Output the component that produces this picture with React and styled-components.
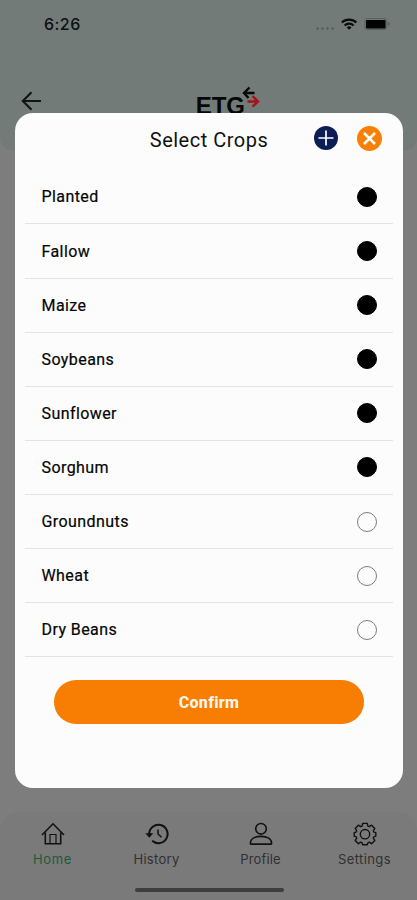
import React, { useState } from 'react';
import styled, { createGlobalStyle } from 'styled-components';

const GlobalStyle = createGlobalStyle`
  * {
    box-sizing: border-box;
  }
  body {
    margin: 0;
    font-family: Roboto, sans-serif;
  }
  button {
    border: 0;
    padding: 0;
    background: none;
    font: inherit;
    color: inherit;
    cursor: pointer;
  }
  svg {
    display: block;
  }
`;

const Screen = styled.div`
  position: relative;
  display: flex;
  flex-direction: column;
  width: 417px;
  height: 900px;
  overflow: hidden;
  background: #7d7d7d;
`;

const Header = styled.header`
  height: 151px;
  background: #737b78;
  border-radius: 0 0 14px 14px;
`;

const StatusBar = styled.div`
  display: flex;
  align-items: center;
  justify-content: space-between;
  height: 48px;
  padding: 0 26px 0 44px;
`;

const Time = styled.span`
  font-family: Inter, sans-serif;
  font-size: 16px;
  font-weight: 500;
  letter-spacing: 0.45px;
  color: #0c100f;
`;

const TitleBar = styled.div`
  display: flex;
  justify-content: space-between;
  padding: 37px 157px 0 21px;
`;

const BackButton = styled.button`
  height: 31px;
`;

const Logo = styled.div`
  display: flex;
  align-items: flex-start;
`;

const LogoText = styled.span`
  margin-top: 7px;
  font-family: 'Liberation Sans', sans-serif;
  font-size: 24px;
  font-weight: 700;
  line-height: 28px;
  color: #050807;
`;

const LogoArrows = styled.svg`
  margin-left: -3px;
`;

const TabBar = styled.nav`
  display: grid;
  grid-template-columns: repeat(4, 104px);
  height: 88px;
  margin-top: auto;
  padding-top: 10px;
  grid-template-rows: 56px 1fr;
  background: #7a7a7a;
  border-radius: 20px 20px 0 0;
`;

const Tab = styled.button`
  display: flex;
  flex-direction: column;
  align-items: center;
  gap: 4px;
  padding-left: 1px;
  font-family: Inter, sans-serif;
  font-size: 13px;
  line-height: 18px;
  letter-spacing: ${({ $spacing }) => $spacing}px;
  color: ${({ $active }) => ($active ? '#1c5a3c' : '#303030')};
`;

const HomeIndicator = styled.div`
  grid-column: 1 / -1;
  justify-self: center;
  width: 149px;
  height: 4px;
  margin-top: 10px;
  margin-left: 3px;
  border-radius: 3px;
  background: #3e3e3e;
`;

const Dialog = styled.section`
  position: absolute;
  top: 113px;
  left: 15px;
  width: 388px;
  height: 675px;
  padding: 0 10px;
  border-radius: 18px;
  background: #fcfcfc;
`;

const DialogHeader = styled.div`
  display: grid;
  grid-template-columns: 1fr auto 1fr;
  height: 57.4px;
`;

const DialogTitle = styled.h1`
  grid-column: 2;
  margin: 0;
  padding-top: 14px;
  font-size: 20px;
  font-weight: 400;
  line-height: 26px;
  letter-spacing: 0.5px;
  color: #111;
`;

const Actions = styled.div`
  display: flex;
  justify-content: flex-end;
  gap: 19px;
  padding: 13px 11px 0 0;
`;

const RoundButton = styled.button`
  display: flex;
  align-items: center;
  justify-content: center;
  width: ${({ $size }) => $size}px;
  height: ${({ $size }) => $size}px;
  border-radius: 50%;
  background: ${({ $color }) => $color};
`;

const CropList = styled.ul`
  margin: 0;
  padding: 0;
  list-style: none;
`;

const CropItem = styled.li`
  display: flex;
  align-items: center;
  justify-content: space-between;
  height: 54.1px;
  padding: 0 16px 0 16.5px;
  border-bottom: 1px solid #e4e4e4;
  font-size: 16px;
  font-weight: 400;
  letter-spacing: 0.42px;
  color: #050505;
  -webkit-text-stroke: 0.2px #050505;
  cursor: pointer;
`;

const Radio = styled.span`
  width: 20px;
  height: 20px;
  border: 1px solid ${({ $checked }) => ($checked ? '#000' : '#7c7c7c')};
  border-radius: 50%;
  background: ${({ $checked }) => ($checked ? '#000' : 'transparent')};
`;

const ConfirmButton = styled.button`
  display: block;
  width: 310px;
  height: 44px;
  margin: 23px 0 0 29px;
  border-radius: 22px;
  background: #f77d03;
  font-size: 16px;
  font-weight: 800;
  letter-spacing: 0.3px;
  color: #fff5ea;
`;

const StatusIcons = () => (
  <svg width="75" height="16" viewBox="0 0 75 16">
    <g fill="#555c59">
      <circle cx="1.5" cy="12.5" r="1.2" />
      <circle cx="6.5" cy="12.5" r="1.2" />
      <circle cx="11.5" cy="12.5" r="1.2" />
      <circle cx="16.5" cy="12.5" r="1.2" />
    </g>
    <g fill="none" stroke="#080c0b" strokeWidth="2.1">
      <path d="M25.8 6.6a10.5 10.5 0 0 1 14.6 0" />
      <path d="M28.6 9.5a6.4 6.4 0 0 1 9 0" />
    </g>
    <path d="M30.7 11.4a3.4 3.4 0 0 1 4.8 0l-2.4 2.4z" fill="#080c0b" />
    <rect x="48.8" y="2.5" width="22" height="11" rx="2.8" fill="none" stroke="#59605d" />
    <rect x="50" y="4" width="19.6" height="8.4" rx="1" fill="#020403" />
    <path d="M72.3 6v4q1.5-.5 1.5-2t-1.5-2" fill="#505754" />
  </svg>
);

const HomeIcon = () => (
  <svg width="24" height="24" viewBox="0 0 24 24" fill="none" stroke="#111" strokeWidth="1.6">
    <path d="M1 13 12 1.8 23 13" />
    <path d="M4.3 10.5v11.2h15.4V10.5" />
    <path d="M9 21.5v-9h6v9" strokeWidth="1.2" />
  </svg>
);

const HistoryIcon = () => (
  <svg width="24" height="24" viewBox="0 0 24 24" fill="none" stroke="#111" strokeWidth="2">
    <path d="M4.2 12a9.2 9.2 0 1 1 3 6.8" />
    <path d="M.3 11.2h8l-4 4.6z" fill="#111" stroke="none" />
    <path d="M13 7.5V12l3.5 3.2" strokeWidth="1.5" />
  </svg>
);

const ProfileIcon = () => (
  <svg width="24" height="24" viewBox="0 0 24 24" fill="none" stroke="#111" strokeWidth="1.6">
    <circle cx="12" cy="6.8" r="5.3" />
    <path d="M1.4 21.4c0-4.4 4.4-7 10.6-7s10.6 2.6 10.6 7c0 .5-.3.7-.8.7H2.2c-.5 0-.8-.2-.8-.7z" />
  </svg>
);

const SettingsIcon = () => (
  <svg width="24" height="24" viewBox="0 0 24 24" fill="none" stroke="#111" strokeWidth="1.4">
    <path
      strokeLinejoin="round"
      d="M9.7 1.4h4.6l.6 2.7 1.3.6 2.4-1.5 3.2 3.2-1.5 2.4.5 1.3 2 .5v3.6l-2 .6-.5 1.3 1.5 2.3-3.2 3.3-2.4-1.5-1.3.6-.6 2H9.7l-.6-2-1.3-.6-2.4 1.5-3.2-3.3 1.5-2.3-.5-1.3-2-.6v-3.6l2-.5.5-1.3-1.5-2.4 3.2-3.2 2.4 1.5 1.3-.6z"
    />
    <circle cx="12" cy="12.2" r="4.7" />
  </svg>
);

const tabs = [
  { label: 'Home', Icon: HomeIcon, spacing: 0.7 },
  { label: 'History', Icon: HistoryIcon, spacing: 0.3 },
  { label: 'Profile', Icon: ProfileIcon, spacing: 0.15 },
  { label: 'Settings', Icon: SettingsIcon, spacing: 0.4 },
];

const crops = [
  'Planted',
  'Fallow',
  'Maize',
  'Soybeans',
  'Sunflower',
  'Sorghum',
  'Groundnuts',
  'Wheat',
  'Dry Beans',
];

const App = () => {
  const [selected, setSelected] = useState(crops.slice(0, 6));

  const toggle = name =>
    setSelected(
      selected.includes(name) ? selected.filter(item => item !== name) : [...selected, name]
    );

  return (
    <Screen>
      <GlobalStyle />
      <Header>
        <StatusBar>
          <Time>6:26</Time>
          <StatusIcons />
        </StatusBar>
        <TitleBar>
          <BackButton aria-label="Back">
            <svg width="21" height="20" viewBox="0 0 21 20" fill="none" stroke="#101413" strokeWidth="2.1">
              <path d="M20 10H2M10.5 1.3 1.8 10l8.7 8.7" />
            </svg>
          </BackButton>
          <Logo>
            <LogoText>ETG</LogoText>
            <LogoArrows width="18" height="24" viewBox="0 0 18 24" fill="none" strokeWidth="2.4">
              <path d="M12.5 8H2.5M7.5 2.5 2 8l4.5 5" stroke="#050807" />
              <path d="M5.5 16.5h10M10.5 11l5.5 5.5-5.5 5.2" stroke="#a8111a" />
            </LogoArrows>
          </Logo>
        </TitleBar>
      </Header>

      <TabBar>
        {tabs.map(({ label, Icon, spacing }, i) => (
          <Tab key={label} $active={i === 0} $spacing={spacing}>
            <Icon />
            {label}
          </Tab>
        ))}
        <HomeIndicator />
      </TabBar>

      <Dialog>
        <DialogHeader>
          <DialogTitle>Select Crops</DialogTitle>
          <Actions>
            <RoundButton $size={24} $color="#0c1c55" aria-label="Add">
              <svg width="16" height="16" viewBox="0 0 16 16" stroke="#fff" strokeWidth="1.7">
                <path d="M8 .5v15M.5 8h15" />
              </svg>
            </RoundButton>
            <RoundButton $size={25} $color="#f98006" aria-label="Close">
              <svg width="13" height="13" viewBox="0 0 13 13" stroke="#fff" strokeWidth="2.5">
                <path d="m1 1 11 11M12 1 1 12" />
              </svg>
            </RoundButton>
          </Actions>
        </DialogHeader>
        <CropList>
          {crops.map(name => (
            <CropItem key={name} onClick={() => toggle(name)}>
              {name}
              <Radio $checked={selected.includes(name)} />
            </CropItem>
          ))}
        </CropList>
        <ConfirmButton>Confirm</ConfirmButton>
      </Dialog>
    </Screen>
  );
};

export default App;
